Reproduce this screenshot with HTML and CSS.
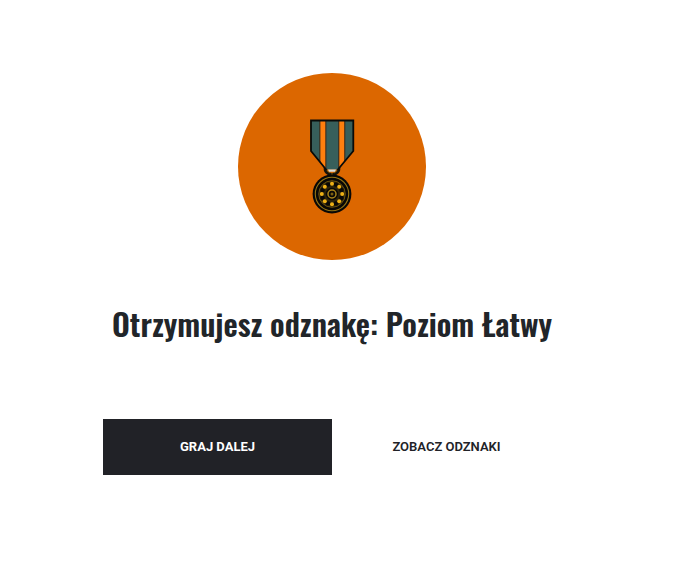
FILE: index.html
```html
<!DOCTYPE html>
<html lang="pl">
<head>
<meta charset="utf-8">
<meta name="viewport" content="width=device-width, initial-scale=1">
<title>Odznaka</title>
<link rel="stylesheet" href="styles.css">
</head>
<body>
<main class="award">
  <div class="badge">
    <svg class="medal" viewBox="0 1 188 187" aria-hidden="true">
      <defs>
        <clipPath id="ribbon"><path d="M73 48H115.300V79L100 97.500H88L73 79Z"/></clipPath>
      </defs>
      <path d="M87.500 95C86 99.500 90 102.500 94 102.500C98 102.500 102 99.500 100.500 95" fill="none" stroke="#17130a" stroke-width="3"/>
      <path d="M88.500 97.500Q90 101 94 101.700Q98 101 99.500 97.500" fill="none" stroke="#7b5f10" stroke-width=".8"/>
      <g clip-path="url(#ribbon)">
        <path d="M72 47H117V99H72Z" fill="#375f5b"/>
        <path d="M81.300 47H88.400V99H81.300ZM100.200 47H107.300V99H100.200Z" fill="#3b2b1b"/>
        <path d="M82.400 47H87.300V99H82.400ZM101.300 47H106.200V99H101.300Z" fill="#ff7f0e"/>
      </g>
      <path d="M88.500 98L73 79V48.500H115.300V79L99.500 98" fill="none" stroke="#080a08" stroke-width="1.800"/>
      <path d="M90 97.500H98L97 99.700H91Z" fill="#d9dddd"/>
      <path d="M94 101V106" stroke="#17130a" stroke-width="4"/>
      <path d="M94 101V104" stroke="#7b5f10" stroke-width="1"/>
      <circle cx="94" cy="122" r="19.400" fill="#090806"/>
      <circle cx="94" cy="122" r="16.700" fill="none" stroke="#957514" stroke-width="1.100"/>
      <circle cx="94" cy="122" r="13.300" fill="#2c230a" stroke="#7b5f10" stroke-width=".8"/>
      <g fill="#090806">
        <circle cx="97.900" cy="112.600" r="2.200"/><circle cx="103.400" cy="118.100" r="2.200"/>
        <circle cx="103.400" cy="125.900" r="2.200"/><circle cx="97.900" cy="131.400" r="2.200"/>
        <circle cx="90.100" cy="131.400" r="2.200"/><circle cx="84.600" cy="125.900" r="2.200"/>
        <circle cx="84.600" cy="118.100" r="2.200"/><circle cx="90.100" cy="112.600" r="2.200"/>
      </g>
      <g fill="#eeb116">
        <circle cx="94" cy="111.800" r="2"/><circle cx="101.200" cy="114.800" r="2"/>
        <circle cx="104.200" cy="122" r="2"/><circle cx="101.200" cy="129.200" r="2"/>
        <circle cx="94" cy="132.200" r="2"/><circle cx="86.800" cy="129.200" r="2"/>
        <circle cx="83.800" cy="122" r="2"/><circle cx="86.800" cy="114.800" r="2"/>
      </g>
      <circle cx="94" cy="122" r="6.200" fill="#090806"/>
      <circle cx="94" cy="122" r="4" fill="none" stroke="#a8841a" stroke-width="1.500"/>
      <circle cx="94" cy="122" r="1.500" fill="#7b5f10"/>
    </svg>
  </div>
  <h1 class="title">Otrzymujesz odznakę: Poziom Łatwy</h1>
  <div class="actions">
    <button class="button button-primary" type="button">GRAJ DALEJ</button>
    <a class="button button-link" href="#">ZOBACZ ODZNAKI</a>
  </div>
</main>
</body>
</html>
```
FILE: styles.css
```css
* {
  box-sizing: border-box;
}

body {
  margin: 0;
  background: #fff;
  color: #212529;
  font-family: Roboto, "Liberation Sans", sans-serif;
}

.award {
  display: flex;
  flex-direction: column;
  align-items: center;
  padding: 73px 22px 72px 0;
}

.badge {
  width: 188px;
  border-radius: 50%;
  background: #dc6700;
}

.medal {
  display: block;
  width: 100%;
}

.title {
  margin: 38px 0 0;
  font-family: Oswald, "Liberation Sans Narrow", sans-serif;
  font-size: 31px;
  font-weight: 600;
  line-height: 50px;
  text-align: center;
}

.actions {
  display: grid;
  grid-template-columns: 1fr 1fr;
  width: 100%;
  max-width: 458px;
  margin-top: 71px;
}

.button {
  display: flex;
  align-items: center;
  justify-content: center;
  height: 56px;
  padding: 0 16px;
  border: 0;
  color: #212227;
  font-family: inherit;
  font-size: 13px;
  font-weight: 700;
  line-height: 16px;
  text-decoration: none;
}

.button-primary {
  background: #212227;
  color: #fff;
}

.button-link {
  font-weight: 600;
}
```
